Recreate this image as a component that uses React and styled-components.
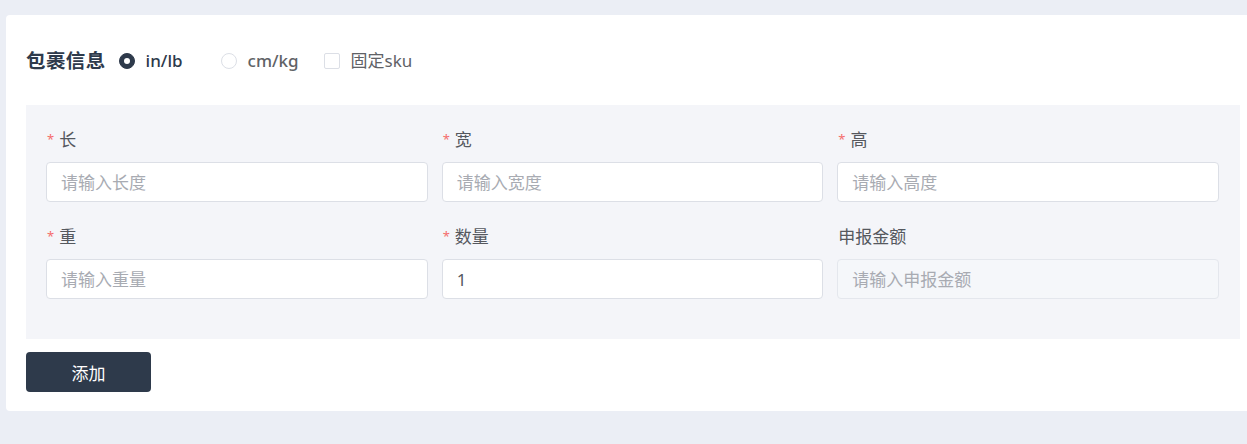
import React from 'react'
import styled, { createGlobalStyle } from 'styled-components'

const GlobalStyle = createGlobalStyle`
  html, body {
    margin: 0;
    padding: 0;
    background: #ebeef5;
    overflow: hidden;
    font-family: "Noto Sans", "Noto Sans CJK SC", sans-serif;
  }
`

const Page = styled.div`
  padding-top: 15px;
  padding-left: 6px;
  height: 444px;
  box-sizing: border-box;
`

const Card = styled.div`
  width: 1254px;
  box-sizing: border-box;
  background: #fff;
  border-radius: 4px;
  padding: 30px 20px 19px 20px;
`

const Header = styled.div`
  display: flex;
  align-items: center;
  height: 32px;
  margin-bottom: 28px;
`

const Title = styled.span`
  font-size: 19.5px;
  font-weight: 700;
  color: #2e3a4b;
  margin-right: 13px;
  line-height: 26px;
  letter-spacing: 0.4px;
`

const Option = styled.label`
  display: flex;
  align-items: center;
  margin-right: ${p => p.$gap}px;
  font-size: 17px;
  line-height: 22px;
  color: ${p => (p.$active ? '#2e3a4b' : '#606266')};
  font-weight: ${p => (p.$bold ? 500 : 400)};
`

const Radio = styled.span`
  width: 16px;
  height: 16px;
  box-sizing: border-box;
  border-radius: 50%;
  border: 1px solid ${p => (p.$checked ? '#2e3a4b' : '#dcdfe6')};
  background: ${p => (p.$checked ? '#2e3a4b' : '#fff')};
  margin-right: 11px;
  display: flex;
  align-items: center;
  justify-content: center;
  &::after {
    content: '';
    width: 6px;
    height: 6px;
    border-radius: 50%;
    background: #fff;
    display: ${p => (p.$checked ? 'block' : 'none')};
  }
`

const Check = styled.span`
  width: 16px;
  height: 16px;
  box-sizing: border-box;
  border-radius: 2px;
  border: 1px solid #dcdfe6;
  background: #fff;
  margin-right: 11px;
`

const Section = styled.div`
  background: #f4f5f9;
  padding: 24px 21px 40px 20px;
  display: grid;
  grid-template-columns: repeat(3, 1fr);
  column-gap: 14px;
  row-gap: 24px;
`

const Field = styled.div`
  display: flex;
  flex-direction: column;
`

const Label = styled.div`
  font-size: 17px;
  line-height: 22px;
  height: 22px;
  color: #55585e;
  margin-bottom: 11px;
  padding-left: 1px;
`

const Star = styled.span`
  color: #f56c6c;
  font-size: 13px;
  margin-right: 5px;
  position: relative;
  top: -2px;
`

const Input = styled.input`
  height: 40px;
  box-sizing: border-box;
  border: 1px solid ${p => (p.disabled ? '#e4e7ed' : '#dcdfe6')};
  background: ${p => (p.disabled ? '#f5f7fa' : '#fff')};
  border-radius: 4px;
  padding: 0 14px;
  font-size: 17px;
  font-family: inherit;
  color: #55585e;
  outline: none;
  &::placeholder {
    color: #a8abb2;
  }
`

const Button = styled.button`
  margin-top: 13px;
  width: 125px;
  height: 40px;
  border: none;
  border-radius: 4px;
  background: #2e3a4b;
  color: #fff;
  font-size: 17px;
  font-family: inherit;
`

const fields = [
  { label: '长', placeholder: '请输入长度', required: true },
  { label: '宽', placeholder: '请输入宽度', required: true },
  { label: '高', placeholder: '请输入高度', required: true },
  { label: '重', placeholder: '请输入重量', required: true },
  { label: '数量', placeholder: '', value: '1', required: true },
  { label: '申报金额', placeholder: '请输入申报金额', disabled: true },
]

export default function App() {
  return (
    <>
      <GlobalStyle />
      <Page>
        <Card>
          <Header>
            <Title>包裹信息</Title>
            <Option $gap={38} $active $bold>
              <Radio $checked />
              in/lb
            </Option>
            <Option $gap={25} $bold>
              <Radio />
              cm/kg
            </Option>
            <Option $gap={0}>
              <Check />
              固定sku
            </Option>
          </Header>
          <Section>
            {fields.map(f => (
              <Field key={f.label}>
                <Label>
                  {f.required && <Star>*</Star>}
                  {f.label}
                </Label>
                <Input
                  placeholder={f.placeholder}
                  defaultValue={f.value}
                  disabled={f.disabled}
                />
              </Field>
            ))}
          </Section>
          <Button>添加</Button>
        </Card>
      </Page>
    </>
  )
}
